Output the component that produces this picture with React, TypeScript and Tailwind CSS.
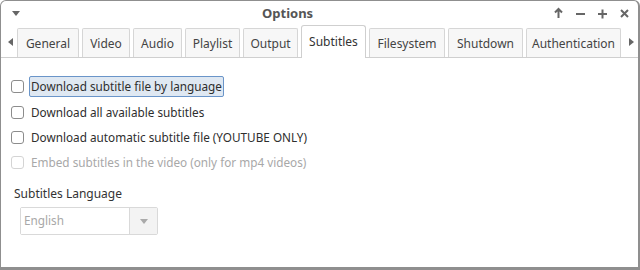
import React from "react";

const Check = ({ label, disabled, focus, h }: { label: string; disabled?: boolean; focus?: boolean; h: string }) => (
  <div className={`flex items-center ${h}`}>
    <div className={`w-[13px] h-[13px] rounded-[3px] border bg-white ${disabled ? "border-[#d4d4d4]" : "border-[#8c8c8c]"}`} />
    <div
      className={`ml-[5px] px-[1px] leading-[19px] border ${focus ? "border-[#6a95c9] bg-[#dfe8f2] rounded-[2px]" : "border-transparent"} ${disabled ? "text-[#a8a8a8]" : "text-[#2e2e2e]"}`}
    >
      {label}
    </div>
  </div>
);

const tabs: [string, number][] = [
  ["General", 62],
  ["Video", 48],
  ["Audio", 49],
  ["Playlist", 55],
  ["Output", 55],
  ["Subtitles", 65],
  ["Filesystem", 76],
  ["Shutdown", 75],
  ["Authentication", 95],
];

export default function App() {
  return (
    <div
      className="w-[640px] h-[270px] bg-white text-[11.75px] overflow-hidden"
      style={{ fontFamily: '"Noto Sans", "Open Sans", sans-serif' }}
    >
      <div className="w-[640px] h-[270px] border border-[#8f8f8f] border-b-[3px] border-r-[2px] rounded-t-[6px] flex flex-col bg-white">
        {/* title bar */}
        <div className="h-[25px] flex items-center relative">
          <div className="absolute left-[11px] top-[10px] w-0 h-0 border-l-[4px] border-r-[4px] border-t-[5px] border-l-transparent border-r-transparent border-t-[#666]" />
          <div className="flex-1 font-bold text-[#555] text-[13px] pl-[261px]">Options</div>
          <div className="absolute right-[7px] top-[6px] flex items-center gap-[9px]">
            <svg width="13" height="13" viewBox="0 0 13 13"><path d="M6.5 2 L6.5 11 M3 5.5 L6.5 2 L10 5.5" stroke="#666" strokeWidth="2" fill="none" /></svg>
            <svg width="13" height="13" viewBox="0 0 13 13"><path d="M2 7 L11 7" stroke="#666" strokeWidth="2" /></svg>
            <svg width="13" height="13" viewBox="0 0 13 13"><path d="M2 7 L11 7 M6.5 2.5 L6.5 11.5" stroke="#666" strokeWidth="2" /></svg>
            <svg width="13" height="13" viewBox="0 0 13 13"><path d="M3 3 L10 10 M10 3 L3 10" stroke="#666" strokeWidth="2" /></svg>
          </div>
        </div>
        {/* tab row */}
        <div className="h-[32px] flex items-end border-b border-[#cfcfcf] relative">
          <div className="w-[16px] h-full flex items-center justify-center">
            <div className="w-0 h-0 border-t-[4px] border-b-[4px] border-r-[5px] border-t-transparent border-b-transparent border-r-[#666] ml-[2px]" />
          </div>
          <div className="flex items-end gap-[3px]">
            {tabs.map(([t, w]) =>
              t === "Subtitles" ? (
                <div key={t} style={{ width: w }} className="h-[33px] -mb-px flex items-center justify-center bg-white border border-b-0 border-[#cfcfcf] rounded-t-[3px] text-[#333] text-[12px]">
                  {t}
                </div>
              ) : (
                <div key={t} style={{ width: w }} className="h-[29px] flex items-center justify-center bg-[#f7f7f7] border border-b-0 border-[#d6d6d6] rounded-t-[2px] text-[#444] pt-[1px] text-[12px]">
                  {t}
                </div>
              )
            )}
          </div>
          <div className="flex-1 h-full flex items-center justify-end pr-[4px]">
            <div className="w-0 h-0 border-t-[4px] border-b-[4px] border-l-[5px] border-t-transparent border-b-transparent border-l-[#666]" />
          </div>
        </div>
        {/* content */}
        <div className="flex-1 pl-[10px] pt-[16px]">
          <Check h="h-[25px]" label="Download subtitle file by language" focus />
          <Check h="h-[26px]" label="Download all available subtitles" />
          <Check h="h-[25px]" label="Download automatic subtitle file (YOUTUBE ONLY)" />
          <Check h="h-[25px]" label="Embed subtitles in the video (only for mp4 videos)" disabled />
          <div className="mt-[10px] ml-[3px] text-[#333] text-[12px]">Subtitles Language</div>
          <div className="mt-[4px] ml-[9px] w-[138px] h-[28px] flex border border-[#d9d9d9] rounded-[2px]">
            <div className="flex-1 flex items-center pl-[3px] text-[#a8a8a8] bg-white">English</div>
            <div className="w-[28px] border-l border-[#d9d9d9] bg-[#f3f3f3] flex items-center justify-center">
              <div className="w-0 h-0 border-l-[4px] border-r-[4px] border-t-[5px] border-l-transparent border-r-transparent border-t-[#aaa]" />
            </div>
          </div>
        </div>
      </div>
    </div>
  );
}
